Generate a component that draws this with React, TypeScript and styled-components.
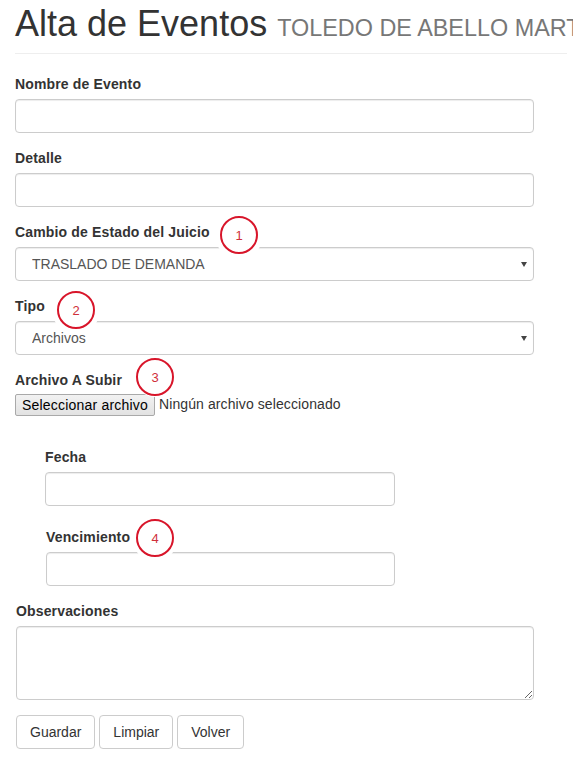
import React, { FC } from 'react';
import styled, { createGlobalStyle } from 'styled-components';

const GlobalStyle = createGlobalStyle`
  html, body {
    margin: 0;
    background: #fff;
    overflow-x: hidden;
  }
  body {
    font-family: "Liberation Sans", Arial, Helvetica, sans-serif;
    font-size: 14px;
    line-height: 1.42857;
    color: #333;
  }
  * {
    box-sizing: border-box;
  }
`;

const markers = [
  { n: 1, x: 220, y: 216, halo: 5 },
  { n: 2, x: 57, y: 291, halo: 5 },
  { n: 3, x: 136, y: 358, halo: 1 },
  { n: 4, x: 136, y: 519, halo: 4 }
];

const App: FC = () => {
  return (
    <Page>
      <GlobalStyle />
      <PageHeader>
        <Title>
          Alta de Eventos <Subtitle>TOLEDO DE ABELLO MARTA</Subtitle>
        </Title>
      </PageHeader>

      <Form onSubmit={(e) => e.preventDefault()}>
        <FormGroup>
          <Label>Nombre de Evento</Label>
          <TextInput type="text" />
        </FormGroup>
        <FormGroup>
          <Label>Detalle</Label>
          <TextInput type="text" />
        </FormGroup>
        <FormGroup>
          <Label>Cambio de Estado del Juicio</Label>
          <SelectWrap>
            <Select defaultValue="traslado">
              <option value="traslado">TRASLADO DE DEMANDA</option>
            </Select>
          </SelectWrap>
        </FormGroup>
        <FormGroup>
          <Label>Tipo</Label>
          <SelectWrap>
            <Select defaultValue="archivos">
              <option value="archivos">Archivos</option>
            </Select>
          </SelectWrap>
        </FormGroup>
        <FormGroup>
          <Label>Archivo A Subir</Label>
          <FileRow>
            <FileButton type="button">Seleccionar archivo</FileButton>
            <FileStatus>Ningún archivo seleccionado</FileStatus>
          </FileRow>
        </FormGroup>

        <DateSection>
          <FormGroup $gap={21}>
            <Label>Fecha</Label>
            <TextInput type="text" />
          </FormGroup>
          <FormGroup $offset={1}>
            <Label>Vencimiento</Label>
            <TextInput type="text" />
          </FormGroup>
        </DateSection>

        <LowerSection>
          <FormGroup>
            <Label>Observaciones</Label>
            <TextArea rows={3} />
          </FormGroup>
          <ButtonRow>
            <Button type="submit">Guardar</Button>
            <Button type="reset">Limpiar</Button>
            <Button type="button">Volver</Button>
          </ButtonRow>
        </LowerSection>
      </Form>

      {markers.map((m) => (
        <Marker key={m.n} $x={m.x} $y={m.y} $halo={m.halo}>
          {m.n}
        </Marker>
      ))}
    </Page>
  );
};

export default App;

const Page = styled.div`
  position: relative;
  width: 573px;
  padding: 4px 6px 16px 15px;
`;

const PageHeader = styled.div`
  padding-bottom: 9px;
  margin-bottom: 20px;
  border-bottom: 1px solid #eee;
`;

const Title = styled.h1`
  margin: 0;
  font-size: 36px;
  font-weight: 400;
  line-height: 1.1;
  color: #333;
  white-space: nowrap;
`;

const Subtitle = styled.small`
  font-size: 65%;
  font-weight: 400;
  color: #777;
`;

const Form = styled.form`
  width: 519px;
`;

const FormGroup = styled.div<{ $gap?: number; $offset?: number }>`
  margin-bottom: ${(p) => p.$gap ?? 15}px;
  margin-left: ${(p) => p.$offset ?? 0}px;
`;

const Label = styled.label`
  display: inline-block;
  max-width: 100%;
  margin-bottom: 5px;
  font-weight: 700;
  font-size: 14px;
  line-height: 20px;
  letter-spacing: 0.15px;
  color: #333;
`;

const TextInput = styled.input`
  display: block;
  width: 100%;
  height: 34px;
  padding: 6px 12px;
  font-family: inherit;
  font-size: 14px;
  color: #555;
  background: #fff;
  border: 1px solid #ccc;
  border-radius: 4px;
  box-shadow: inset 0 1px 1px rgba(0, 0, 0, 0.075);
  outline: none;
`;

const SelectWrap = styled.div`
  position: relative;

  &::after {
    content: '';
    position: absolute;
    right: 7px;
    top: 15px;
    border-left: 3px solid transparent;
    border-right: 3px solid transparent;
    border-top: 5px solid #444;
    pointer-events: none;
  }
`;

const Select = styled.select`
  display: block;
  width: 100%;
  height: 34px;
  padding: 6px 24px 6px 16px;
  font-family: inherit;
  font-size: 14px;
  color: #555;
  background: #fff;
  border: 1px solid #ccc;
  border-radius: 4px;
  box-shadow: inset 0 1px 1px rgba(0, 0, 0, 0.075);
  appearance: none;
  -webkit-appearance: none;
  outline: none;
`;

const FileRow = styled.div`
  display: flex;
  align-items: center;
  gap: 4px;
  height: 21px;
`;

const FileButton = styled.button`
  height: 22px;
  padding: 0 6px;
  font-family: inherit;
  font-size: 14px;
  line-height: 20px;
  letter-spacing: 0.2px;
  color: #000;
  background: linear-gradient(#f2f2f2, #e2e2e2);
  border: 1px solid #a9a9a9;
  border-radius: 2px;
  white-space: nowrap;
`;

const FileStatus = styled.span`
  font-size: 14px;
  letter-spacing: 0.1px;
  color: #333;
  white-space: nowrap;
`;

const DateSection = styled.div`
  width: 380px;
  padding: 16px 0 0 30px;
`;

const LowerSection = styled.div`
  padding-left: 1px;
`;

const TextArea = styled.textarea`
  display: block;
  width: 100%;
  height: 74px;
  padding: 6px 12px;
  font-family: inherit;
  font-size: 14px;
  color: #555;
  background: #fff;
  border: 1px solid #ccc;
  border-radius: 4px;
  box-shadow: inset 0 1px 1px rgba(0, 0, 0, 0.075);
  resize: vertical;
  outline: none;
`;

const ButtonRow = styled.div`
  display: flex;
  gap: 4px;
`;

const Button = styled.button`
  height: 34px;
  padding: 6px 13px;
  font-family: inherit;
  font-size: 14px;
  line-height: 20px;
  color: #333;
  background: #fff;
  border: 1px solid #ccc;
  border-radius: 4px;
  cursor: pointer;
`;

const Marker = styled.div<{ $x: number; $y: number; $halo: number }>`
  position: absolute;
  left: ${(p) => p.$x}px;
  top: ${(p) => p.$y}px;
  width: 38px;
  height: 38px;
  display: flex;
  align-items: center;
  justify-content: center;
  border: 2.5px solid #d8152a;
  border-radius: 50%;
  background: #fff;
  box-shadow: 0 0 0 ${(p) => p.$halo}px #fff;
  font-family: "Liberation Sans", Arial, sans-serif;
  font-size: 13px;
  line-height: 1;
  color: #cf2f3a;
`;
